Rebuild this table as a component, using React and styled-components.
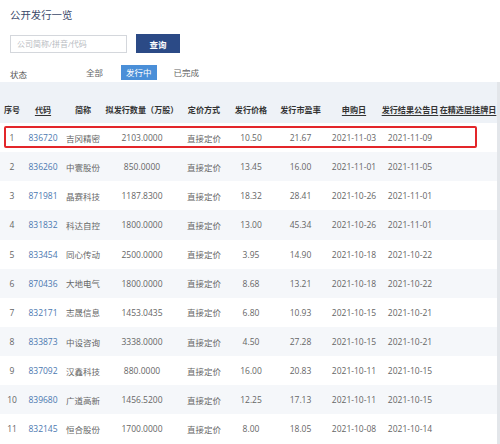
import React from "react";
import styled, { createGlobalStyle } from "styled-components";

const Global = createGlobalStyle`
  html, body { margin: 0; padding: 0; background: #fff; }
  body { font-family: "Open Sans", "Noto Sans CJK SC", sans-serif; width: 500px; height: 444px; overflow: hidden; }
`;

const Page = styled.div`
  width: 500px;
  height: 444px;
  overflow: hidden;
  position: relative;
`;

const Top = styled.div`
  padding: 7px 10px 0 10px;
  height: 75px;
  box-sizing: border-box;
`;

const Title = styled.div`
  font-size: 10.4px;
  line-height: 16px;
  color: #3b4a6b;
`;

const SearchRow = styled.div`
  display: flex;
  align-items: center;
  gap: 9px;
  margin-top: 11px;
`;

const Input = styled.div`
  width: 117px;
  height: 18px;
  box-sizing: border-box;
  border: 1px solid #d4d7dc;
  font-size: 8px;
  color: #b9bcc2;
  padding-left: 6px;
  display: flex;
  align-items: center;
`;

const Button = styled.div`
  width: 44px;
  height: 19px;
  background: #2b4a86;
  color: #fff;
  font-size: 8.5px;
  font-weight: bold;
  display: flex;
  align-items: center;
  justify-content: center;
`;

const StatusRow = styled.div`
  display: flex;
  align-items: center;
  margin-top: 12px;
  height: 15px;
  font-size: 8.5px;
  color: #555;
`;

const StatusLabel = styled.span`
  width: 76px;
  padding-top: 3px;
`;

const Tab = styled.span`
  padding: 0 ${p => (p.$active ? "5px" : "0")};
  height: 15px;
  line-height: 15px;
  margin-right: ${p => p.$gap}px;
  background: ${p => (p.$active ? "#4a8fd8" : "transparent")};
  color: ${p => (p.$active ? "#fff" : "#666")};
`;

const Band = styled.div`
  background: #eef2f7;
  margin-top: 7px;
  padding-top: 13px;
  border-right: 3px solid #e3e6ea;
`;

const cols = "24px 38px 42px 76px 48px 46px 53px 54px 58px 58px";

const HeadRow = styled.div`
  display: grid;
  grid-template-columns: ${cols};
  height: 28px;
  align-items: center;
  font-size: 8.1px;
  font-weight: bold;
  color: #333;
`;

const HeadCell = styled.div`
  text-align: center;
  white-space: nowrap;
  text-decoration: ${p => (p.$u ? "underline" : "none")};
  text-underline-offset: 2px;
`;

const Row = styled.div`
  display: grid;
  grid-template-columns: ${cols};
  height: 29.15px;
  align-items: center;
  font-size: 8.5px;
  color: #666;
  background: ${p => (p.$alt ? "#f5f7fa" : "#fff")};
  position: relative;
`;

const Cell = styled.div`
  text-align: center;
  white-space: nowrap;
  color: ${p => (p.$link ? "#4b78b0" : "#666")};
`;

const Highlight = styled.div`
  position: absolute;
  left: 4px;
  top: 3px;
  width: 473px;
  height: 22px;
  box-sizing: border-box;
  border: 2px solid #e3262a;
  border-radius: 2px;
  pointer-events: none;
`;

const heads = [
  ["序号"], ["代码", true], ["简称"], ["拟发行数量（万股）"], ["定价方式"],
  ["发行价格"], ["发行市盈率"], ["申购日", true], ["发行结果公告日", true], ["在精选层挂牌日", true],
];

const data = [
  ["836720", "吉冈精密", "2103.0000", "10.50", "21.67", "2021-11-03", "2021-11-09"],
  ["836260", "中寰股份", "850.0000", "13.45", "16.00", "2021-11-01", "2021-11-05"],
  ["871981", "晶赛科技", "1187.8300", "18.32", "28.41", "2021-10-26", "2021-11-01"],
  ["831832", "科达自控", "1800.0000", "13.00", "45.34", "2021-10-26", "2021-11-01"],
  ["833454", "同心传动", "2500.0000", "3.95", "14.90", "2021-10-18", "2021-10-22"],
  ["870436", "大地电气", "1800.0000", "8.68", "13.21", "2021-10-18", "2021-10-22"],
  ["832171", "志晟信息", "1453.0435", "6.80", "10.93", "2021-10-15", "2021-10-21"],
  ["833873", "中设咨询", "3338.0000", "4.50", "27.28", "2021-10-15", "2021-10-21"],
  ["837092", "汉鑫科技", "880.0000", "16.00", "20.83", "2021-10-11", "2021-10-15"],
  ["839680", "广道高新", "1456.5200", "12.25", "17.13", "2021-10-11", "2021-10-15"],
  ["832145", "恒合股份", "1700.0000", "8.00", "18.05", "2021-10-08", "2021-10-14"],
];

export default function App() {
  return (
    <Page>
      <Global />
      <Top>
        <Title>公开发行一览</Title>
        <SearchRow>
          <Input>公司简称/拼音/代码</Input>
          <Button>查询</Button>
        </SearchRow>
        <StatusRow>
          <StatusLabel>状态</StatusLabel>
          <Tab $gap={18}>全部</Tab>
          <Tab $active $gap={17}>发行中</Tab>
          <Tab $gap={0}>已完成</Tab>
        </StatusRow>
      </Top>
      <Band>
        <HeadRow>
          {heads.map(([t, u]) => (
            <HeadCell key={t} $u={u}>{t}</HeadCell>
          ))}
        </HeadRow>
        {data.map((r, i) => (
          <Row key={r[0]} $alt={i % 2 === 1}>
            <Cell>{i + 1}</Cell>
            <Cell $link>{r[0]}</Cell>
            <Cell>{r[1]}</Cell>
            <Cell>{r[2]}</Cell>
            <Cell>直接定价</Cell>
            <Cell>{r[3]}</Cell>
            <Cell>{r[4]}</Cell>
            <Cell>{r[5]}</Cell>
            <Cell>{r[6]}</Cell>
            <Cell></Cell>
            {i === 0 && <Highlight />}
          </Row>
        ))}
      </Band>
    </Page>
  );
}
